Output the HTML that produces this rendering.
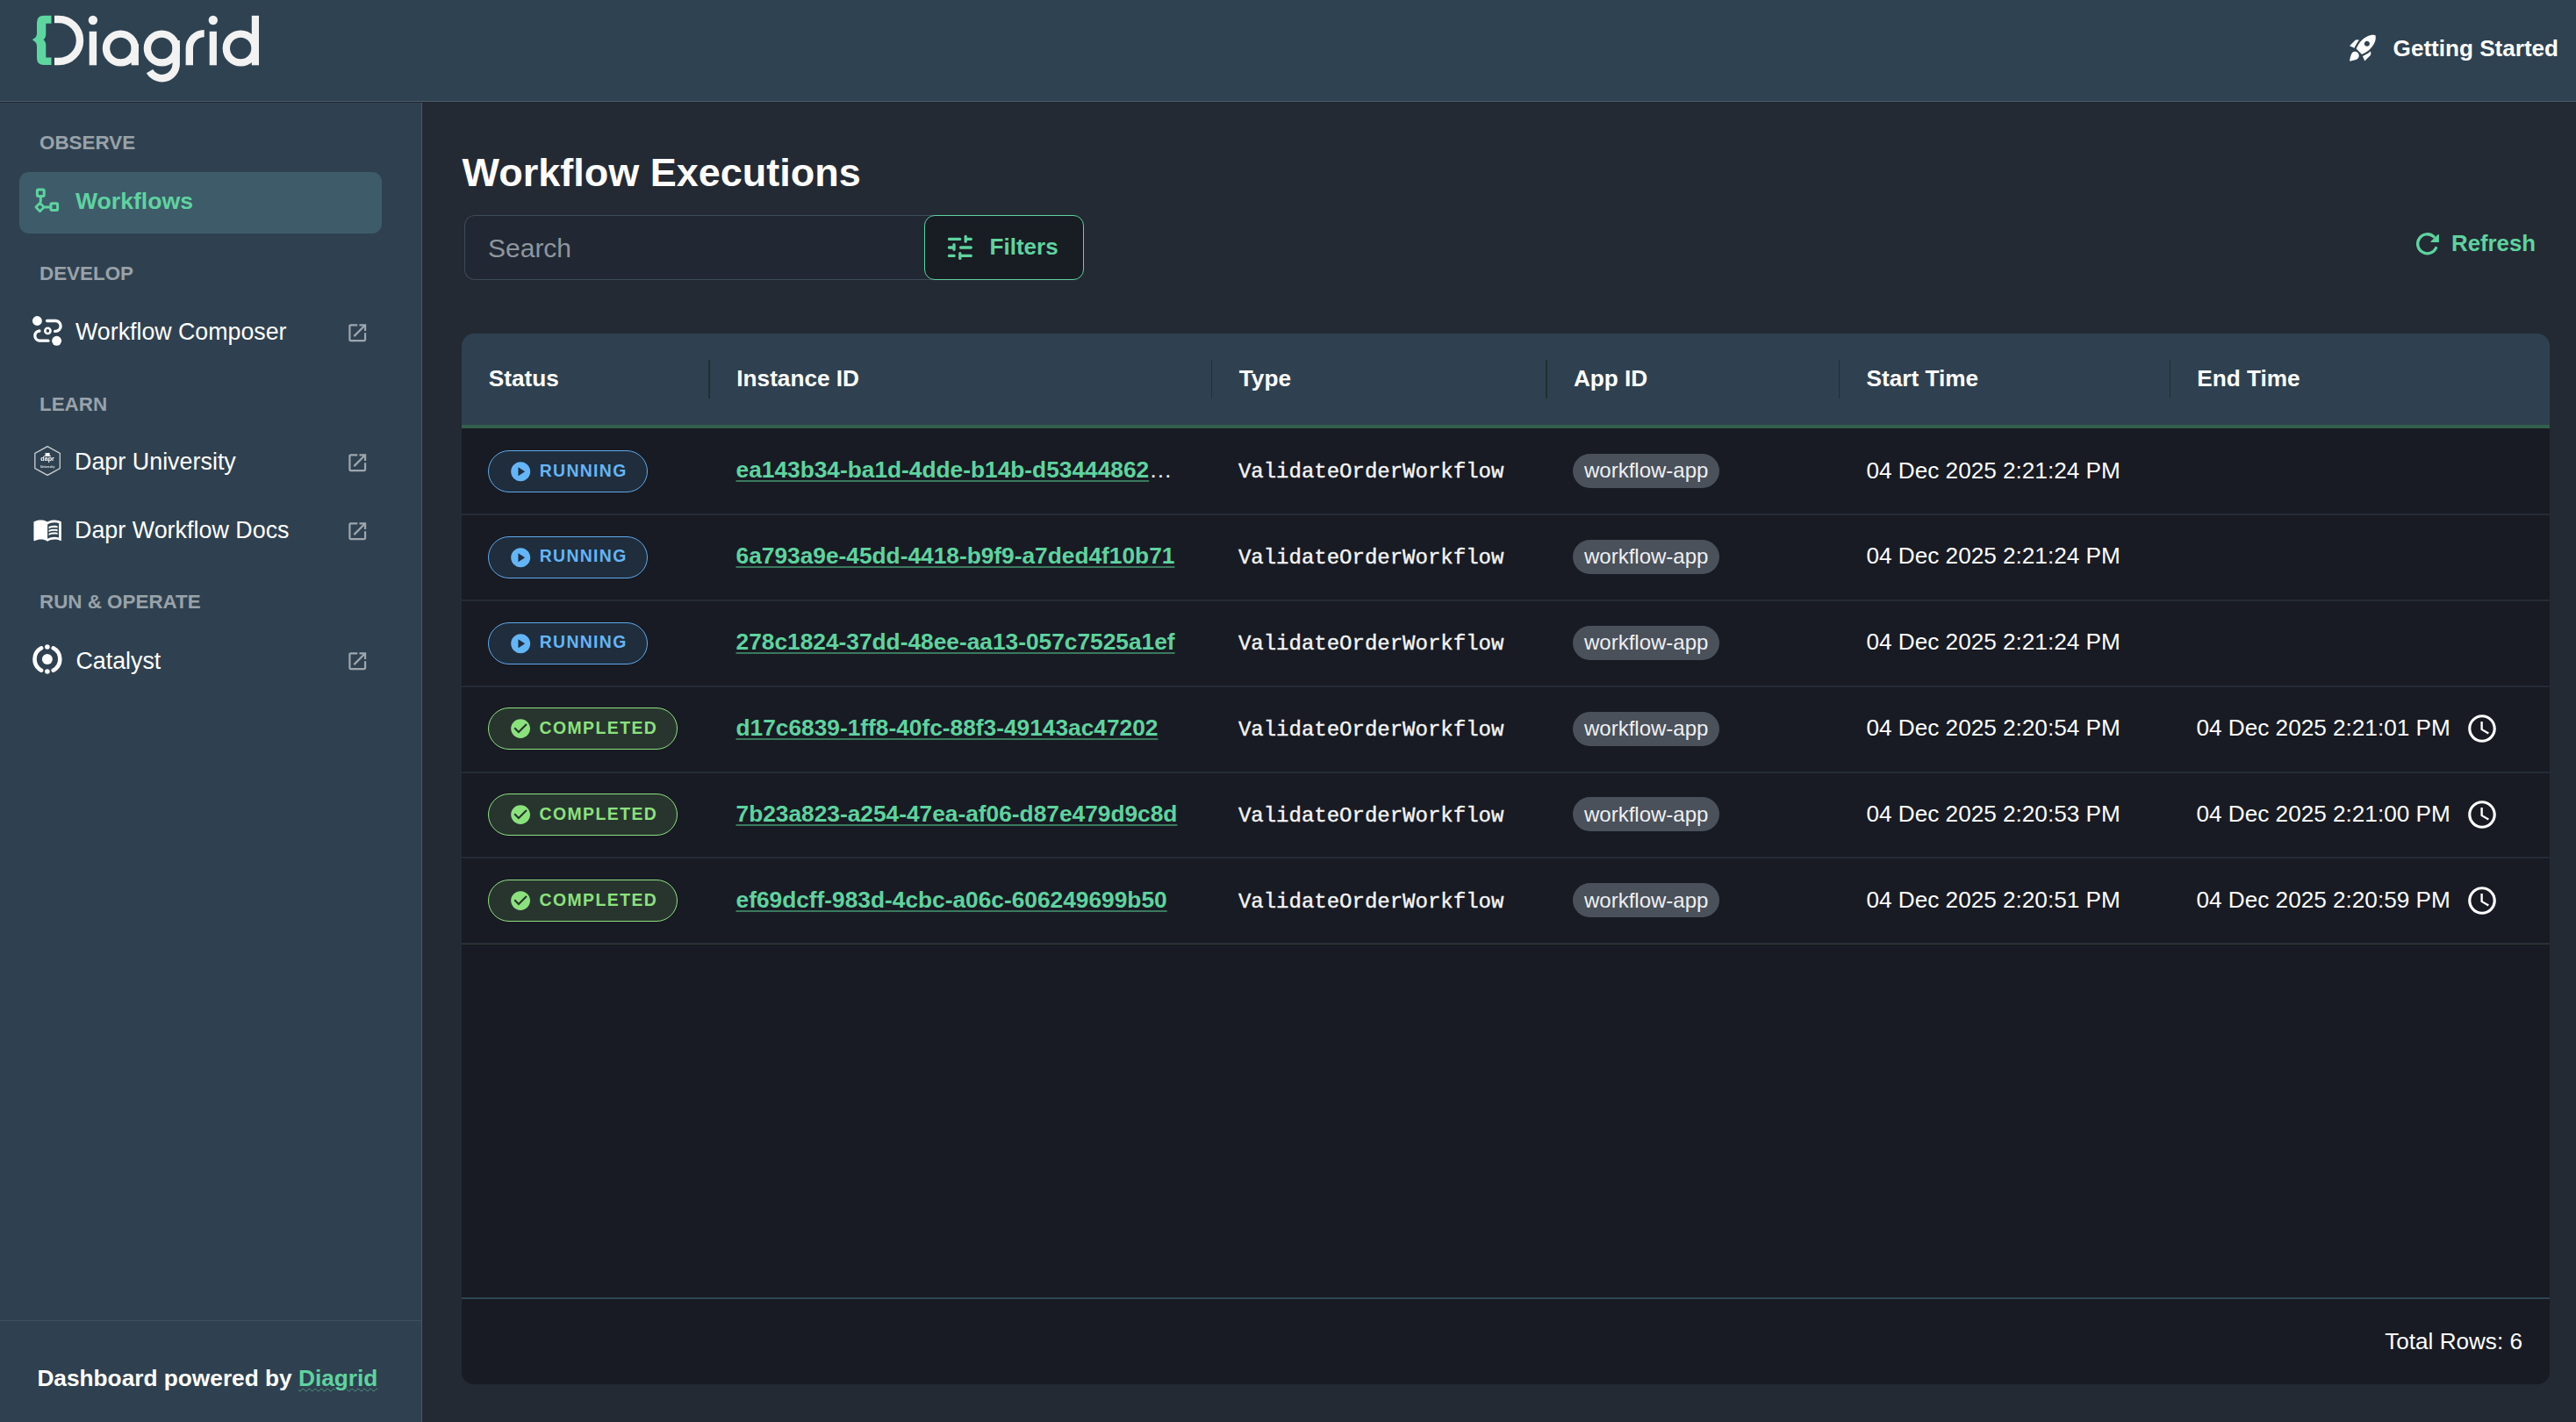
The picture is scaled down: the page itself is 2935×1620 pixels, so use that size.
<!DOCTYPE html>
<html><head><meta charset="utf-8"><title>Workflow Executions</title>
<style>
html,body{margin:0;padding:0;}
body{width:2935px;height:1620px;overflow:hidden;position:relative;background:#232a34;font-family:'Liberation Sans', sans-serif;}
.t{position:absolute;white-space:nowrap;}
svg{display:block}
</style></head><body>
<div style="position:absolute;left:0;top:0;width:2935px;height:115px;background:#2f4251"></div><div style="position:absolute;left:0;top:115px;width:2935px;height:1px;background:#4e5b66"></div><div style="position:absolute;left:0;top:116px;width:2935px;height:1px;background:#1f2731"></div><svg style="position:absolute;left:0;top:0" width="320" height="110" viewBox="0 0 320 110">
<path fill="#5ed6a0" d="M58.5,17.8 H50 Q42,17.8 42,26 V38 Q42,42 38.5,44 L36.7,45.3 L38.5,46.6 Q42,48.6 42,53 V66 Q42,74.1 50,74.1 H58.5 V65.4 H52.3 V52 Q52.3,47.5 49.5,45.3 Q52.3,43 52.3,38.5 V26.8 H58.5 Z"/>
<g fill="none" stroke="#f2f2f2" stroke-width="8.4">
<path d="M62,22 H67 A24,24 0 0 1 67,70 H62"/>
<circle cx="137.4" cy="55" r="16.4"/>
<circle cx="184.3" cy="55" r="16.4"/>
<path d="M200.7,46 V73 A16.2,16.2 0 0 1 170.5,81.1"/>
<path d="M215.8,74.3 V55 A16.9,16.9 0 0 1 232.7,38.1"/>
<circle cx="274.2" cy="55" r="16.4"/>
</g>
<g fill="#f2f2f2">
<rect x="149.7" y="50" width="8.2" height="24.3"/>
<rect x="101.7" y="35.8" width="8.4" height="38.5"/>
<circle cx="105.9" cy="23" r="5.2"/>
<rect x="238.7" y="35.8" width="8.2" height="38.5"/>
<circle cx="242.8" cy="23" r="5.2"/>
<rect x="286.8" y="17.8" width="8.2" height="56.5"/>
</g>
</svg><svg style="position:absolute;left:2673.7px;top:36.2px" width="36.6" height="36.6" viewBox="0 0 24 24"><path fill="#fff" d="M9.19 6.35c-2.04 2.29-3.44 5.58-3.57 5.89L2 10.69 6.05 6.64c.47-.47 1.15-.68 1.81-.55l1.33.26zM11.17 17s3.74-1.55 5.89-3.7c5.4-5.4 4.5-9.62 4.21-10.57-.95-.3-5.17-1.19-10.57 4.21C8.55 9.09 7 12.83 7 12.83L11.17 17zm6.48-2.19c-2.29 2.04-5.58 3.44-5.89 3.57L13.31 22l4.05-4.05c.47-.47.68-1.15.55-1.81l-.26-1.33zM9 18c0 .83-.34 1.58-.88 2.12C6.94 21.3 2 22 2 22s.7-4.94 1.88-6.12C4.42 15.34 5.17 15 6 15c1.66 0 3 1.34 3 3zm4-9c0-1.1.9-2 2-2s2 .9 2 2-.9 2-2 2-2-.9-2-2z"/></svg><div class="t" style="left:2726.6px;top:41.91px;font-size:26.1px;line-height:26.1px;color:#fff;font-weight:700;font-family:'Liberation Sans', sans-serif;">Getting Started</div><div style="position:absolute;left:0;top:117px;width:480px;height:1503px;background:#2f4150"></div><div style="position:absolute;left:480px;top:117px;width:1px;height:1503px;background:#4c5965"></div><div style="position:absolute;left:0;top:1503.5px;width:480px;height:1.5px;background:#3e505d"></div><div class="t" style="left:45px;top:152.04px;font-size:22.4px;line-height:22.4px;color:#9aa2a9;font-weight:700;font-family:'Liberation Sans', sans-serif;">OBSERVE</div><div class="t" style="left:45px;top:301.24px;font-size:22.4px;line-height:22.4px;color:#9aa2a9;font-weight:700;font-family:'Liberation Sans', sans-serif;">DEVELOP</div><div class="t" style="left:45px;top:450.04px;font-size:22.4px;line-height:22.4px;color:#9aa2a9;font-weight:700;font-family:'Liberation Sans', sans-serif;">LEARN</div><div class="t" style="left:45px;top:675.44px;font-size:22.4px;line-height:22.4px;color:#9aa2a9;font-weight:700;font-family:'Liberation Sans', sans-serif;">RUN &amp; OPERATE</div><div style="position:absolute;left:22px;top:196px;width:413px;height:70px;border-radius:11px;background:#3e5b6a"></div><svg style="position:absolute;left:0;top:200px" width="80" height="50" viewBox="0 200 80 50"><g fill="none" stroke="#5ed39f" stroke-width="3" stroke-linejoin="round">
<rect x="42.4" y="216" width="7.8" height="7.5" rx="1.2"/>
<path d="M46.3,223.5 V230.5"/>
<path d="M45.5,231.3 L50.1,236 L45.5,240.7 L40.9,236 Z" stroke-width="2.7"/>
<path d="M50.1,236 H58"/>
<rect x="58" y="231.8" width="7.6" height="7.6" rx="1.2"/>
</g></svg><div class="t" style="left:86px;top:216.38px;font-size:26.6px;line-height:26.6px;color:#5ed39f;font-weight:700;font-family:'Liberation Sans', sans-serif;">Workflows</div><svg style="position:absolute;left:0;top:350px" width="80" height="50" viewBox="0 350 80 50"><g fill="#fff"><circle cx="42.4" cy="365.5" r="5.45"/><circle cx="64.6" cy="388.3" r="5.45"/></g>
<g fill="none" stroke="#fff" stroke-width="3.3" stroke-linecap="round">
<path d="M53.6,365.5 H63.2 A5.95,5.95 0 0 1 63.2,377.4 H62.6"/>
<path d="M45,377 A5.6,5.6 0 0 0 44.8,388.15 H55"/>
<circle cx="54.4" cy="376.9" r="3.1" stroke-width="2.6"/>
</g></svg><div class="t" style="left:86.1px;top:365.42px;font-size:26.75px;line-height:26.75px;color:#fff;font-weight:400;font-family:'Liberation Sans', sans-serif;">Workflow Composer</div><svg style="position:absolute;left:393.8px;top:365.90px" width="26.5" height="26.5" viewBox="0 0 24 24"><path fill="#9ea6ae" d="M19 19H5V5h7V3H5c-1.11 0-2 .9-2 2v14c0 1.1.89 2 2 2h14c1.1 0 2-.9 2-2v-7h-2v7zM14 3v2h3.59l-9.83 9.83 1.41 1.41L19 6.41V10h2V3h-7z"/></svg><svg style="position:absolute;left:0;top:500px;will-change:transform" width="80" height="50" viewBox="0 500 80 50">
<path d="M54.1,508.6 L68.3,516.4 V533.5 L54.1,541.4 L39.8,533.5 V516.4 Z" fill="none" stroke="#c9cdd1" stroke-width="1.3"/>
<rect x="51.6" y="516" width="5" height="3.3" fill="#fff"/><rect x="50.2" y="519" width="7.8" height="0.9" fill="#fff"/>
<text x="54.1" y="524.6" text-anchor="middle" font-family="Liberation Sans" font-weight="700" font-size="7.2" fill="#fff">dapr</text>
<text x="54.1" y="532.8" text-anchor="middle" font-family="Liberation Sans" font-weight="700" font-size="3.4" fill="#e6e6e6">University</text>
</svg><div class="t" style="left:85px;top:513.33px;font-size:26.9px;line-height:26.9px;color:#fff;font-weight:400;font-family:'Liberation Sans', sans-serif;">Dapr University</div><svg style="position:absolute;left:393.8px;top:514.40px" width="26.5" height="26.5" viewBox="0 0 24 24"><path fill="#9ea6ae" d="M19 19H5V5h7V3H5c-1.11 0-2 .9-2 2v14c0 1.1.89 2 2 2h14c1.1 0 2-.9 2-2v-7h-2v7zM14 3v2h3.59l-9.83 9.83 1.41 1.41L19 6.41V10h2V3h-7z"/></svg><svg style="position:absolute;left:36.7px;top:585.6px" width="34.3" height="34.3" viewBox="0 0 24 24"><path fill="#fff" d="M21 5c-1.11-.35-2.33-.5-3.5-.5-1.95 0-4.05.4-5.5 1.5-1.45-1.1-3.55-1.5-5.5-1.5S2.450 4.9 1 6v14.65c0 .25.25.5.5.5.1 0 .15-.05.25-.05C3.1 20.45 5.05 20 6.5 20c1.95 0 4.05.4 5.5 1.5 1.35-.85 3.8-1.5 5.5-1.5 1.65 0 3.35.3 4.75 1.05.1.05.15.05.25.05.25 0 .5-.25.5-.5V6c-.6-.45-1.25-.75-2-1zm0 13.5c-1.1-.35-2.3-.5-3.5-.5-1.7 0-4.150.65-5.5 1.5V8c1.35-.85 3.8-1.5 5.5-1.5 1.2 0 2.4.15 3.5.5v11.5zM17.5 10.5c.88 0 1.73.09 2.5.26V9.24c-.79-.15-1.64-.24-2.5-.24-1.7 0-3.24.29-4.5.83v1.66c1.13-.64 2.7-.99 4.5-.99zM13 12.49v1.66c1.13-.64 2.7-.99 4.5-.99.88 0 1.73.09 2.5.26V11.9c-.79-.15-1.64-.24-2.5-.24-1.7 0-3.24.3-4.5.83zM17.5 14.33c-1.7 0-3.24.29-4.5.83v1.66c1.13-.64 2.7-.99 4.5-.99.88 0 1.73.09 2.5.26v-1.52c-.79-.16-1.64-.24-2.5-.24z"/></svg><div class="t" style="left:85px;top:591.23px;font-size:26.9px;line-height:26.9px;color:#fff;font-weight:400;font-family:'Liberation Sans', sans-serif;">Dapr Workflow Docs</div><svg style="position:absolute;left:393.8px;top:591.80px" width="26.5" height="26.5" viewBox="0 0 24 24"><path fill="#9ea6ae" d="M19 19H5V5h7V3H5c-1.11 0-2 .9-2 2v14c0 1.1.89 2 2 2h14c1.1 0 2-.9 2-2v-7h-2v7zM14 3v2h3.59l-9.83 9.83 1.41 1.41L19 6.41V10h2V3h-7z"/></svg><svg style="position:absolute;left:0;top:725px" width="80" height="50" viewBox="0 725 80 50"><g fill="#fff"><circle cx="53.9" cy="751" r="6"/><circle cx="53.9" cy="737" r="2.8"/><circle cx="53.9" cy="765" r="2.8"/></g>
<g fill="none" stroke="#fff" stroke-width="4.6" stroke-linecap="round">
<path d="M47.1,738.3 A14.4,14.4 0 0 0 47.1,763.7"/>
<path d="M60.7,738.3 A14.4,14.4 0 0 1 60.7,763.7"/>
</g></svg><div class="t" style="left:86.5px;top:740.11px;font-size:26.8px;line-height:26.8px;color:#fff;font-weight:400;font-family:'Liberation Sans', sans-serif;">Catalyst</div><svg style="position:absolute;left:393.8px;top:739.70px" width="26.5" height="26.5" viewBox="0 0 24 24"><path fill="#9ea6ae" d="M19 19H5V5h7V3H5c-1.11 0-2 .9-2 2v14c0 1.1.89 2 2 2h14c1.1 0 2-.9 2-2v-7h-2v7zM14 3v2h3.59l-9.83 9.83 1.41 1.41L19 6.41V10h2V3h-7z"/></svg><div class="t" style="left:42.4px;top:1557.08px;font-size:26.25px;line-height:26.25px;color:#fff;font-weight:700;font-family:'Liberation Sans', sans-serif;">Dashboard powered by <span style="color:#5ed39f;text-decoration:underline;text-decoration-style:wavy;text-decoration-thickness:1px;text-underline-offset:1.5px;text-decoration-color:rgba(94,211,159,0.55)">Diagrid</span></div><div class="t" style="left:526.6px;top:173.51px;font-size:45px;line-height:45px;color:#fff;font-weight:700;font-family:'Liberation Sans', sans-serif;">Workflow Executions</div><div style="position:absolute;left:529px;top:245px;width:560px;height:74px;border:1.3px solid #3d4b58;border-right:none;border-radius:12px 0 0 12px;background:#212833;box-sizing:border-box"></div><div class="t" style="left:556px;top:267.61px;font-size:30px;line-height:30px;color:#8e969e;font-weight:400;font-family:'Liberation Sans', sans-serif;">Search</div><div style="position:absolute;left:1053px;top:245px;width:182px;height:74px;border:1.6px solid #5ed39f;border-radius:12px;background:#181c23;box-sizing:border-box"></div><svg style="position:absolute;left:1070px;top:260px" width="45" height="45" viewBox="1070 260 45 45"><g fill="none" stroke="#5ed39f" stroke-width="3.3" stroke-linecap="round">
<path d="M1081.4,272.4 H1093.7 M1100.2,269.5 V275.2 M1100.2,272.4 H1106.3 M1081.4,282 H1087 M1087,278.6 V284.3 M1094.6,282 H1106.3 M1081.4,291.4 H1087.1 M1093.8,288.7 V294.4 M1093.8,291.4 H1106.3"/></g></svg><div class="t" style="left:1127.6px;top:267.99px;font-size:26px;line-height:26px;color:#5ed39f;font-weight:700;font-family:'Liberation Sans', sans-serif;">Filters</div><svg style="position:absolute;left:2745px;top:258px" width="40" height="40" viewBox="2745 258 40 40"><path d="M2773.1,269.7 A11,11 0 1 0 2775.6,282.4" fill="none" stroke="#5ed39f" stroke-width="3.3" stroke-linecap="round"/><path d="M2770,275.4 L2778.3,275.4 L2778.3,267.5 Z" fill="#5ed39f" stroke="#5ed39f" stroke-width="1.2" stroke-linejoin="round"/></svg><div class="t" style="left:2793px;top:265.16px;font-size:25.8px;line-height:25.8px;color:#5ed39f;font-weight:700;font-family:'Liberation Sans', sans-serif;">Refresh</div><div style="position:absolute;left:526px;top:380px;width:2379px;height:1197px;border-radius:14px;background:#181b23;overflow:hidden"><div style="position:absolute;left:0;top:0;width:100%;height:104px;background:#2f4150"></div><div style="position:absolute;left:0;top:104px;width:100%;height:4px;background:#33604b"></div></div><div style="position:absolute;left:807.4px;top:410px;width:1.3px;height:44px;background:#22302f"></div><div style="position:absolute;left:1379.7px;top:410px;width:1.3px;height:44px;background:#22302f"></div><div style="position:absolute;left:1761.4px;top:410px;width:1.3px;height:44px;background:#22302f"></div><div style="position:absolute;left:2094.7000000000003px;top:410px;width:1.3px;height:44px;background:#22302f"></div><div style="position:absolute;left:2472.0px;top:410px;width:1.3px;height:44px;background:#22302f"></div><div class="t" style="left:556.8px;top:418.02px;font-size:26.2px;line-height:26.2px;color:#fff;font-weight:700;font-family:'Liberation Sans', sans-serif;">Status</div><div class="t" style="left:839.3px;top:418.02px;font-size:26.2px;line-height:26.2px;color:#fff;font-weight:700;font-family:'Liberation Sans', sans-serif;">Instance ID</div><div class="t" style="left:1411.8px;top:418.02px;font-size:26.2px;line-height:26.2px;color:#fff;font-weight:700;font-family:'Liberation Sans', sans-serif;">Type</div><div class="t" style="left:1792.9px;top:418.02px;font-size:26.2px;line-height:26.2px;color:#fff;font-weight:700;font-family:'Liberation Sans', sans-serif;">App ID</div><div class="t" style="left:2126.5px;top:418.02px;font-size:26.2px;line-height:26.2px;color:#fff;font-weight:700;font-family:'Liberation Sans', sans-serif;">Start Time</div><div class="t" style="left:2503.2px;top:418.02px;font-size:26.2px;line-height:26.2px;color:#fff;font-weight:700;font-family:'Liberation Sans', sans-serif;">End Time</div><div style="position:absolute;left:526px;top:585.00px;width:2379px;height:2px;background:#252b36"></div><div style="position:absolute;left:556px;top:512.90px;width:182px;height:48px;border:1.4px solid #5fa9ec;border-radius:24px;background:#1f2d3d;box-sizing:border-box"></div><svg style="position:absolute;left:579.8px;top:523.90px" width="26.4" height="26.4" viewBox="0 0 24 24"><path fill="#64b5f6" d="M12 2C6.48 2 2 6.48 2 12s4.48 10 10 10 10-4.48 10-10S17.52 2 12 2zM9.5 16.5v-9l7 4.5-7 4.5z"/></svg><div class="t" style="left:614.7px;top:526.58px;font-size:19.4px;line-height:19.4px;color:#64b5f6;font-weight:700;font-family:'Liberation Sans', sans-serif;letter-spacing:1.35px">RUNNING</div><div class="t" style="left:838.5px;top:522.44px;font-size:26.3px;line-height:26.3px;color:#5ed39f;font-weight:700;font-family:'Liberation Sans', sans-serif;"><span style="text-decoration:underline;text-underline-offset:2.5px;text-decoration-thickness:2px;text-decoration-color:#3a7a5e">ea143b34-ba1d-4dde-b14b-d53444862</span><span style="color:#f2f2f2;font-weight:400">&#8230;</span></div><div class="t" style="left:1410.9px;top:526.31px;font-size:24px;line-height:24px;color:#f4f4f4;font-weight:400;font-family:'Liberation Mono', monospace;-webkit-text-stroke:0.4px #f4f4f4">ValidateOrderWorkflow</div><div style="position:absolute;left:1792.2px;top:517.00px;width:167px;height:39px;border-radius:19.5px;background:#4a515b"></div><div class="t" style="left:1805px;top:524.38px;font-size:24px;line-height:24px;color:#eef0f2;font-weight:400;font-family:'Liberation Sans', sans-serif;">workflow-app</div><div class="t" style="left:2126.5px;top:522.56px;font-size:26.15px;line-height:26.15px;color:#fff;font-weight:400;font-family:'Liberation Sans', sans-serif;">04 Dec 2025 2:21:24 PM</div><div style="position:absolute;left:526px;top:682.85px;width:2379px;height:2px;background:#252b36"></div><div style="position:absolute;left:556px;top:610.75px;width:182px;height:48px;border:1.4px solid #5fa9ec;border-radius:24px;background:#1f2d3d;box-sizing:border-box"></div><svg style="position:absolute;left:579.8px;top:621.75px" width="26.4" height="26.4" viewBox="0 0 24 24"><path fill="#64b5f6" d="M12 2C6.48 2 2 6.48 2 12s4.48 10 10 10 10-4.48 10-10S17.52 2 12 2zM9.5 16.5v-9l7 4.5-7 4.5z"/></svg><div class="t" style="left:614.7px;top:624.43px;font-size:19.4px;line-height:19.4px;color:#64b5f6;font-weight:700;font-family:'Liberation Sans', sans-serif;letter-spacing:1.35px">RUNNING</div><div class="t" style="left:838.5px;top:620.29px;font-size:26.3px;line-height:26.3px;color:#5ed39f;font-weight:700;font-family:'Liberation Sans', sans-serif;"><span style="text-decoration:underline;text-underline-offset:2.5px;text-decoration-thickness:2px;text-decoration-color:#3a7a5e">6a793a9e-45dd-4418-b9f9-a7ded4f10b71</span></div><div class="t" style="left:1410.9px;top:624.16px;font-size:24px;line-height:24px;color:#f4f4f4;font-weight:400;font-family:'Liberation Mono', monospace;-webkit-text-stroke:0.4px #f4f4f4">ValidateOrderWorkflow</div><div style="position:absolute;left:1792.2px;top:614.85px;width:167px;height:39px;border-radius:19.5px;background:#4a515b"></div><div class="t" style="left:1805px;top:622.23px;font-size:24px;line-height:24px;color:#eef0f2;font-weight:400;font-family:'Liberation Sans', sans-serif;">workflow-app</div><div class="t" style="left:2126.5px;top:620.41px;font-size:26.15px;line-height:26.15px;color:#fff;font-weight:400;font-family:'Liberation Sans', sans-serif;">04 Dec 2025 2:21:24 PM</div><div style="position:absolute;left:526px;top:780.70px;width:2379px;height:2px;background:#252b36"></div><div style="position:absolute;left:556px;top:708.60px;width:182px;height:48px;border:1.4px solid #5fa9ec;border-radius:24px;background:#1f2d3d;box-sizing:border-box"></div><svg style="position:absolute;left:579.8px;top:719.60px" width="26.4" height="26.4" viewBox="0 0 24 24"><path fill="#64b5f6" d="M12 2C6.48 2 2 6.48 2 12s4.48 10 10 10 10-4.48 10-10S17.52 2 12 2zM9.5 16.5v-9l7 4.5-7 4.5z"/></svg><div class="t" style="left:614.7px;top:722.28px;font-size:19.4px;line-height:19.4px;color:#64b5f6;font-weight:700;font-family:'Liberation Sans', sans-serif;letter-spacing:1.35px">RUNNING</div><div class="t" style="left:838.5px;top:718.14px;font-size:26.3px;line-height:26.3px;color:#5ed39f;font-weight:700;font-family:'Liberation Sans', sans-serif;"><span style="text-decoration:underline;text-underline-offset:2.5px;text-decoration-thickness:2px;text-decoration-color:#3a7a5e">278c1824-37dd-48ee-aa13-057c7525a1ef</span></div><div class="t" style="left:1410.9px;top:722.01px;font-size:24px;line-height:24px;color:#f4f4f4;font-weight:400;font-family:'Liberation Mono', monospace;-webkit-text-stroke:0.4px #f4f4f4">ValidateOrderWorkflow</div><div style="position:absolute;left:1792.2px;top:712.70px;width:167px;height:39px;border-radius:19.5px;background:#4a515b"></div><div class="t" style="left:1805px;top:720.08px;font-size:24px;line-height:24px;color:#eef0f2;font-weight:400;font-family:'Liberation Sans', sans-serif;">workflow-app</div><div class="t" style="left:2126.5px;top:718.26px;font-size:26.15px;line-height:26.15px;color:#fff;font-weight:400;font-family:'Liberation Sans', sans-serif;">04 Dec 2025 2:21:24 PM</div><div style="position:absolute;left:526px;top:878.55px;width:2379px;height:2px;background:#252b36"></div><div style="position:absolute;left:556px;top:806.45px;width:216px;height:48px;border:1.4px solid #8ee07f;border-radius:24px;background:#28352f;box-sizing:border-box"></div><svg style="position:absolute;left:579.9px;top:816.90px" width="26.2" height="26.2" viewBox="0 0 24 24"><path fill="#8be27d" d="M12 2C6.48 2 2 6.48 2 12s4.48 10 10 10 10-4.48 10-10S17.52 2 12 2zm-2 15-5-5 1.41-1.41L10 14.17l7.59-7.59L19 8l-9 9z"/></svg><div class="t" style="left:614.5px;top:820.13px;font-size:19.4px;line-height:19.4px;color:#8be27d;font-weight:700;font-family:'Liberation Sans', sans-serif;letter-spacing:1.45px">COMPLETED</div><div class="t" style="left:838.5px;top:815.99px;font-size:26.3px;line-height:26.3px;color:#5ed39f;font-weight:700;font-family:'Liberation Sans', sans-serif;"><span style="text-decoration:underline;text-underline-offset:2.5px;text-decoration-thickness:2px;text-decoration-color:#3a7a5e">d17c6839-1ff8-40fc-88f3-49143ac47202</span></div><div class="t" style="left:1410.9px;top:819.86px;font-size:24px;line-height:24px;color:#f4f4f4;font-weight:400;font-family:'Liberation Mono', monospace;-webkit-text-stroke:0.4px #f4f4f4">ValidateOrderWorkflow</div><div style="position:absolute;left:1792.2px;top:810.55px;width:167px;height:39px;border-radius:19.5px;background:#4a515b"></div><div class="t" style="left:1805px;top:817.93px;font-size:24px;line-height:24px;color:#eef0f2;font-weight:400;font-family:'Liberation Sans', sans-serif;">workflow-app</div><div class="t" style="left:2126.5px;top:816.11px;font-size:26.15px;line-height:26.15px;color:#fff;font-weight:400;font-family:'Liberation Sans', sans-serif;">04 Dec 2025 2:20:54 PM</div><div class="t" style="left:2502.5px;top:816.11px;font-size:26.15px;line-height:26.15px;color:#fff;font-weight:400;font-family:'Liberation Sans', sans-serif;">04 Dec 2025 2:21:01 PM</div><svg style="position:absolute;left:2808.8px;top:810.80px" width="38" height="38" viewBox="0 0 24 24"><path fill="#fff" d="M11.99 2C6.47 2 2 6.48 2 12s4.47 10 9.99 10C17.52 22 22 17.52 22 12S17.52 2 11.99 2zM12 20c-4.42 0-8-3.58-8-8s3.58-8 8-8 8 3.58 8 8-3.58 8-8 8zm.5-13H11v6l5.25 3.15.75-1.23-4.5-2.67z"/></svg><div style="position:absolute;left:526px;top:976.40px;width:2379px;height:2px;background:#252b36"></div><div style="position:absolute;left:556px;top:904.30px;width:216px;height:48px;border:1.4px solid #8ee07f;border-radius:24px;background:#28352f;box-sizing:border-box"></div><svg style="position:absolute;left:579.9px;top:914.75px" width="26.2" height="26.2" viewBox="0 0 24 24"><path fill="#8be27d" d="M12 2C6.48 2 2 6.48 2 12s4.48 10 10 10 10-4.48 10-10S17.52 2 12 2zm-2 15-5-5 1.41-1.41L10 14.17l7.59-7.59L19 8l-9 9z"/></svg><div class="t" style="left:614.5px;top:917.98px;font-size:19.4px;line-height:19.4px;color:#8be27d;font-weight:700;font-family:'Liberation Sans', sans-serif;letter-spacing:1.45px">COMPLETED</div><div class="t" style="left:838.5px;top:913.84px;font-size:26.3px;line-height:26.3px;color:#5ed39f;font-weight:700;font-family:'Liberation Sans', sans-serif;"><span style="text-decoration:underline;text-underline-offset:2.5px;text-decoration-thickness:2px;text-decoration-color:#3a7a5e">7b23a823-a254-47ea-af06-d87e479d9c8d</span></div><div class="t" style="left:1410.9px;top:917.71px;font-size:24px;line-height:24px;color:#f4f4f4;font-weight:400;font-family:'Liberation Mono', monospace;-webkit-text-stroke:0.4px #f4f4f4">ValidateOrderWorkflow</div><div style="position:absolute;left:1792.2px;top:908.40px;width:167px;height:39px;border-radius:19.5px;background:#4a515b"></div><div class="t" style="left:1805px;top:915.78px;font-size:24px;line-height:24px;color:#eef0f2;font-weight:400;font-family:'Liberation Sans', sans-serif;">workflow-app</div><div class="t" style="left:2126.5px;top:913.96px;font-size:26.15px;line-height:26.15px;color:#fff;font-weight:400;font-family:'Liberation Sans', sans-serif;">04 Dec 2025 2:20:53 PM</div><div class="t" style="left:2502.5px;top:913.96px;font-size:26.15px;line-height:26.15px;color:#fff;font-weight:400;font-family:'Liberation Sans', sans-serif;">04 Dec 2025 2:21:00 PM</div><svg style="position:absolute;left:2808.8px;top:908.65px" width="38" height="38" viewBox="0 0 24 24"><path fill="#fff" d="M11.99 2C6.47 2 2 6.48 2 12s4.47 10 9.99 10C17.52 22 22 17.52 22 12S17.52 2 11.99 2zM12 20c-4.42 0-8-3.58-8-8s3.58-8 8-8 8 3.58 8 8-3.58 8-8 8zm.5-13H11v6l5.25 3.15.75-1.23-4.5-2.67z"/></svg><div style="position:absolute;left:526px;top:1074.25px;width:2379px;height:1px;background:#262b37"></div><div style="position:absolute;left:526px;top:1075.25px;width:2379px;height:1px;background:#2c3b33"></div><div style="position:absolute;left:556px;top:1002.15px;width:216px;height:48px;border:1.4px solid #8ee07f;border-radius:24px;background:#28352f;box-sizing:border-box"></div><svg style="position:absolute;left:579.9px;top:1012.60px" width="26.2" height="26.2" viewBox="0 0 24 24"><path fill="#8be27d" d="M12 2C6.48 2 2 6.48 2 12s4.48 10 10 10 10-4.48 10-10S17.52 2 12 2zm-2 15-5-5 1.41-1.41L10 14.17l7.59-7.59L19 8l-9 9z"/></svg><div class="t" style="left:614.5px;top:1015.83px;font-size:19.4px;line-height:19.4px;color:#8be27d;font-weight:700;font-family:'Liberation Sans', sans-serif;letter-spacing:1.45px">COMPLETED</div><div class="t" style="left:838.5px;top:1011.69px;font-size:26.3px;line-height:26.3px;color:#5ed39f;font-weight:700;font-family:'Liberation Sans', sans-serif;"><span style="text-decoration:underline;text-underline-offset:2.5px;text-decoration-thickness:2px;text-decoration-color:#3a7a5e">ef69dcff-983d-4cbc-a06c-606249699b50</span></div><div class="t" style="left:1410.9px;top:1015.56px;font-size:24px;line-height:24px;color:#f4f4f4;font-weight:400;font-family:'Liberation Mono', monospace;-webkit-text-stroke:0.4px #f4f4f4">ValidateOrderWorkflow</div><div style="position:absolute;left:1792.2px;top:1006.25px;width:167px;height:39px;border-radius:19.5px;background:#4a515b"></div><div class="t" style="left:1805px;top:1013.63px;font-size:24px;line-height:24px;color:#eef0f2;font-weight:400;font-family:'Liberation Sans', sans-serif;">workflow-app</div><div class="t" style="left:2126.5px;top:1011.81px;font-size:26.15px;line-height:26.15px;color:#fff;font-weight:400;font-family:'Liberation Sans', sans-serif;">04 Dec 2025 2:20:51 PM</div><div class="t" style="left:2502.5px;top:1011.81px;font-size:26.15px;line-height:26.15px;color:#fff;font-weight:400;font-family:'Liberation Sans', sans-serif;">04 Dec 2025 2:20:59 PM</div><svg style="position:absolute;left:2808.8px;top:1006.50px" width="38" height="38" viewBox="0 0 24 24"><path fill="#fff" d="M11.99 2C6.47 2 2 6.48 2 12s4.47 10 9.99 10C17.52 22 22 17.52 22 12S17.52 2 11.99 2zM12 20c-4.42 0-8-3.58-8-8s3.58-8 8-8 8 3.58 8 8-3.58 8-8 8zm.5-13H11v6l5.25 3.15.75-1.23-4.5-2.67z"/></svg><div style="position:absolute;left:526px;top:1478.3px;width:2379px;height:1.5px;background:#2f4553"></div><div class="t" style="left:2717.3px;top:1515.01px;font-size:26.1px;line-height:26.1px;color:#fff;font-weight:400;font-family:'Liberation Sans', sans-serif;">Total Rows: 6</div>
</body></html>
